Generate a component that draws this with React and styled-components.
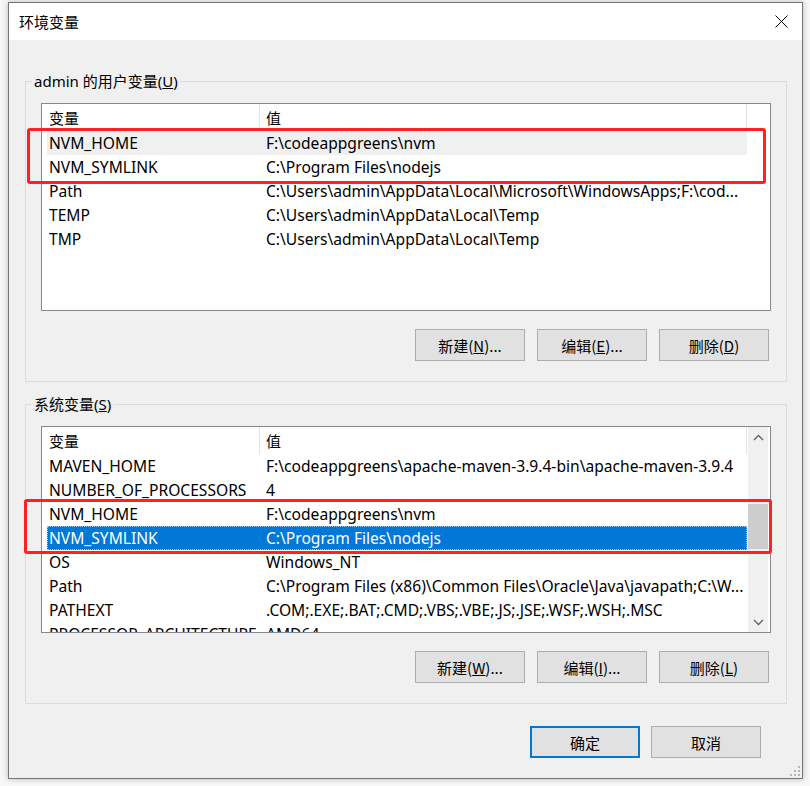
import styled, { createGlobalStyle } from "styled-components";

const Global = createGlobalStyle`
  body {
    margin: 0;
    font-family: "Noto Sans", "Noto Sans CJK SC", sans-serif;
    font-size: 15.6px;
    color: #000;
  }
`

const Page = styled.div`
  width: 810px;
  height: 786px;
  background: #f7f7f7;
  padding: 2px 0 0 8px;
  box-sizing: border-box;
  overflow: hidden;
  position: relative;
`

const Dialog = styled.div`
  width: 795px;
  height: 777px;
  box-sizing: border-box;
  border: 1px solid #767676;
  background: #f0f0f0;
  box-shadow: 0 0 6px rgba(0,0,0,.25);
  display: flex;
  flex-direction: column;
  position: relative;
`

const TitleBar = styled.div`
  height: 37px;
  background: #fff;
  display: flex;
  align-items: center;
  justify-content: space-between;
  padding: 0 14px 0 10px;
  font-family: "Noto Sans CJK SC", sans-serif;
  font-size: 15px;
`

const Body = styled.div`
  display: flex;
  flex-direction: column;
  padding: 31px 15px 0 16px;
`

const Group = styled.fieldset`
  margin: ${p => p.$top}px 0 0 0;
  padding: 12px 15px 20px 15px;
  border: 1px solid #dcdcdc;
  min-width: 0;
`

const Legend = styled.legend`
  margin-left: -9px;
  padding: 0 2px;
  line-height: 20px;
  font-size: 15px;
  font-family: "Noto Sans", "Noto Sans CJK SC", sans-serif;
`

const ListWrap = styled.div`
  position: relative;
`

const List = styled.div`
  height: ${p => p.$h}px;
  box-sizing: border-box;
  border: 1px solid #828790;
  background: #fff;
  padding-left: 5px;
  display: flex;
  overflow: hidden;
`

const Rows = styled.div`
  width: 700px;
  flex: none;
`

const Header = styled.div`
  display: grid;
  grid-template-columns: 212px 1fr;
  height: 27px;
  align-items: stretch;
  font-family: "Noto Sans CJK SC", sans-serif;
  font-size: 15px;
`

const HeadCell = styled.div`
  display: flex;
  align-items: center;
  padding-left: ${p => (p.$second ? 6 : 2)}px;
  ${p => p.$second && "border-left: 1px solid #e5e5e5; border-right: 1px solid #e5e5e5;"}
`

const Row = styled.div`
  display: grid;
  grid-template-columns: 217px 1fr;
  height: 24px;
  align-items: center;
  white-space: nowrap;
  overflow: hidden;
  box-sizing: border-box;
  background: ${p => (p.$sel ? "#0078d7" : p.$hover ? "#f0f0f0" : "transparent")};
  color: ${p => (p.$sel ? "#fff" : "#000")};
  outline: ${p => (p.$sel ? "1px dotted #9cc6ee" : "none")};
  outline-offset: -1px;
`

const Cell = styled.span`
  padding-left: 2px;
  overflow: hidden;
`

const Scroll = styled.div`
  width: 20px;
  margin-left: 1px;
  background: #f0f0f0;
  display: flex;
  flex-direction: column;
  align-items: center;
`

const Arrow = styled.div`
  height: 20px;
  display: flex;
  align-items: center;
  justify-content: center;
`

const Track = styled.div`
  flex: 1;
  width: 100%;
`

const Thumb = styled.div`
  margin-top: 57px;
  height: 45px;
  width: 100%;
  background: #cdcdcd;
`

const Mark = styled.div`
  position: absolute;
  left: ${p => p.$l}px;
  top: ${p => p.$t}px;
  width: ${p => p.$w}px;
  height: ${p => p.$h}px;
  border: 3px solid #ff2020;
  border-radius: 3px;
  box-sizing: border-box;
  pointer-events: none;
`

const BtnRow = styled.div`
  display: flex;
  justify-content: flex-end;
  gap: 12px;
  margin-top: 18px;
  padding-right: 2px;
`

const Button = styled.button`
  width: 110px;
  height: 32px;
  box-sizing: border-box;
  background: #e1e1e1;
  border: ${p => (p.$def ? "2px solid #0078d7" : "1px solid #adadad")};
  font-family: "Noto Sans CJK SC", "Noto Sans", sans-serif;
  font-size: 15px;
  color: #000;
  padding: 0;
  u { text-decoration: underline; }
`

const Footer = styled.div`
  display: flex;
  justify-content: flex-end;
  gap: 11px;
  margin-top: 22px;
  padding-right: 41px;
`

const Grip = styled.svg`
  position: absolute;
  right: 2px;
  bottom: 2px;
`

const userVars = [
  ["NVM_HOME", "F:\\codeappgreens\\nvm"],
  ["NVM_SYMLINK", "C:\\Program Files\\nodejs"],
  ["Path", "C:\\Users\\admin\\AppData\\Local\\Microsoft\\WindowsApps;F:\\cod..."],
  ["TEMP", "C:\\Users\\admin\\AppData\\Local\\Temp"],
  ["TMP", "C:\\Users\\admin\\AppData\\Local\\Temp"],
]

const sysVars = [
  ["MAVEN_HOME", "F:\\codeappgreens\\apache-maven-3.9.4-bin\\apache-maven-3.9.4"],
  ["NUMBER_OF_PROCESSORS", "4"],
  ["NVM_HOME", "F:\\codeappgreens\\nvm"],
  ["NVM_SYMLINK", "C:\\Program Files\\nodejs"],
  ["OS", "Windows_NT"],
  ["Path", "C:\\Program Files (x86)\\Common Files\\Oracle\\Java\\javapath;C:\\W..."],
  ["PATHEXT", ".COM;.EXE;.BAT;.CMD;.VBS;.VBE;.JS;.JSE;.WSF;.WSH;.MSC"],
  ["PROCESSOR_ARCHITECTURE", "AMD64"],
]

function VarRows({ data, hover, sel }) {
  return (
    <Rows>
      <Header>
        <HeadCell>变量</HeadCell>
        <HeadCell $second>值</HeadCell>
      </Header>
      {data.map(([k, v], i) => (
        <Row key={k} $hover={i === hover} $sel={i === sel}>
          <Cell>{k}</Cell>
          <Cell>{v}</Cell>
        </Row>
      ))}
    </Rows>
  )
}

function Chevron({ up }) {
  return (
    <svg width="11" height="7" viewBox="0 0 11 7">
      <path d={up ? "M1 6 L5.5 1.5 L10 6" : "M1 1 L5.5 5.5 L10 1"} fill="none" stroke="#606060" strokeWidth="1.3" />
    </svg>
  )
}

export default function App() {
  return (
    <Page>
      <Global />
      <Dialog>
        <TitleBar>
          <span>环境变量</span>
          <svg width="13" height="13" viewBox="0 0 13 13">
            <path d="M0.5 0.5 L12.5 12.5 M12.5 0.5 L0.5 12.5" stroke="#000" strokeWidth="1" />
          </svg>
        </TitleBar>
        <Body>
          <Group $top={0}>
            <Legend>admin 的用户变量(<u>U</u>)</Legend>
            <ListWrap>
              <List $h={208}>
                <VarRows data={userVars} hover={0} />
              </List>
              <Mark $l={-14} $t={25} $w={739} $h={56} />
            </ListWrap>
            <BtnRow>
              <Button>新建(<u>N</u>)...</Button>
              <Button>编辑(<u>E</u>)...</Button>
              <Button>删除(<u>D</u>)</Button>
            </BtnRow>
          </Group>
          <Group $top={12}>
            <Legend>系统变量(<u>S</u>)</Legend>
            <ListWrap>
              <List $h={207}>
                <VarRows data={sysVars} sel={3} />
                <Scroll>
                  <Arrow><Chevron up /></Arrow>
                  <Track><Thumb /></Track>
                  <Arrow><Chevron /></Arrow>
                </Scroll>
              </List>
              <Mark $l={-17} $t={73} $w={748} $h={55} />
            </ListWrap>
            <BtnRow>
              <Button>新建(<u>W</u>)...</Button>
              <Button>编辑(<u>I</u>)...</Button>
              <Button>删除(<u>L</u>)</Button>
            </BtnRow>
          </Group>
        </Body>
        <Footer>
          <Button $def>确定</Button>
          <Button>取消</Button>
        </Footer>
        <Grip width="10" height="10" viewBox="0 0 10 10">
          <g fill="#b5b5b5">
            <rect x="8" y="0" width="2" height="2" />
            <rect x="4" y="4" width="2" height="2" />
            <rect x="8" y="4" width="2" height="2" />
            <rect x="0" y="8" width="2" height="2" />
            <rect x="4" y="8" width="2" height="2" />
            <rect x="8" y="8" width="2" height="2" />
          </g>
        </Grip>
      </Dialog>
    </Page>
  )
}
